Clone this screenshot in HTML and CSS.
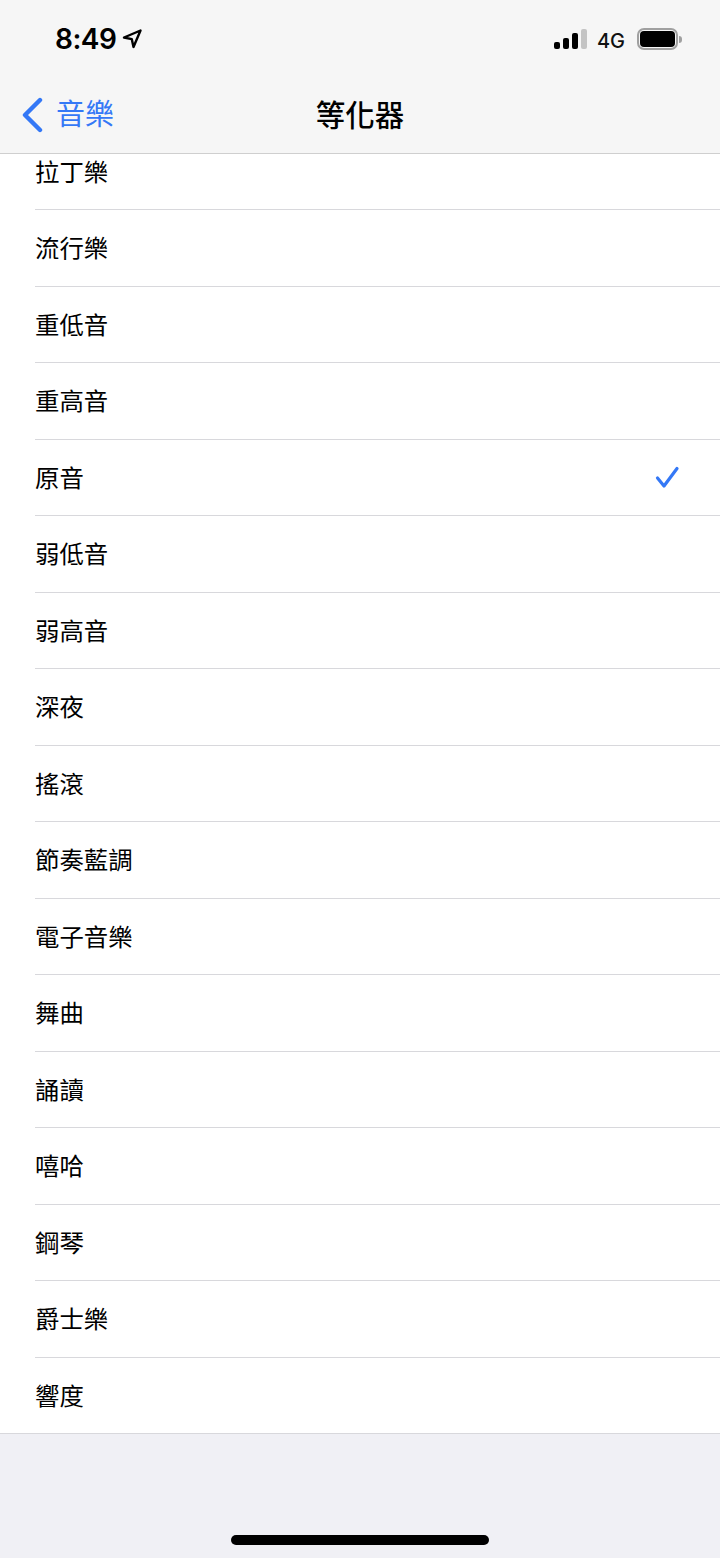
FILE: index.html
```html
<!DOCTYPE html>
<html lang="zh-Hant">
<head>
    <meta charset="UTF-8">
    <meta name="viewport" content="width=device-width, initial-scale=1.0">
    <title>等化器</title>
    <link rel="stylesheet" href="styles.css">
</head>
<body>

    <div class="top-bar">
        <div class="status-bar">
            <div class="status-left">
                <span class="time">8:49</span>
                <svg class="location" width="22" height="22" viewBox="0 0 22 22">
                    <path d="M3 9.5 L19.5 2.5 L12.5 19 L10.8 11.2 Z" fill="none" stroke="#000" stroke-width="2.4" stroke-linejoin="round"/>
                </svg>
            </div>
            <div class="status-right">
                <div class="signal">
                    <span class="signal-bar bar-1"></span>
                    <span class="signal-bar bar-2"></span>
                    <span class="signal-bar bar-3"></span>
                    <span class="signal-bar bar-4"></span>
                </div>
                <span class="network">4G</span>
                <div class="battery">
                    <div class="battery-body"><div class="battery-fill"></div></div>
                    <div class="battery-cap"></div>
                </div>
            </div>
        </div>

        <div class="nav-bar">
            <div class="back">
                <svg width="22" height="36" viewBox="0 0 22 36">
                    <path d="M19 3 L4 18 L19 33" fill="none" stroke="#3478f6" stroke-width="4.4" stroke-linecap="round" stroke-linejoin="round"/>
                </svg>
                <span class="back-label">音樂</span>
            </div>
            <div class="nav-title">等化器</div>
        </div>
    </div>

    <div class="list-wrap">
        <ul class="list">
            <li class="row">拉丁樂</li>
            <li class="row">流行樂</li>
            <li class="row">重低音</li>
            <li class="row">重高音</li>
            <li class="row">原音
                <svg class="check" width="26" height="26" viewBox="0 0 26 26">
                    <path d="M3.5 14 L10 22 L23 4.5" fill="none" stroke="#3478f6" stroke-width="3.2" stroke-linecap="round" stroke-linejoin="round"/>
                </svg>
            </li>
            <li class="row">弱低音</li>
            <li class="row">弱高音</li>
            <li class="row">深夜</li>
            <li class="row">搖滾</li>
            <li class="row">節奏藍調</li>
            <li class="row">電子音樂</li>
            <li class="row">舞曲</li>
            <li class="row">誦讀</li>
            <li class="row">嘻哈</li>
            <li class="row">鋼琴</li>
            <li class="row">爵士樂</li>
            <li class="row">響度</li>
        </ul>
    </div>

    <div class="home-area">
        <div class="home-indicator"></div>
    </div>

</body>
</html>
```

FILE: styles.css
```css
* {
    box-sizing: border-box;
}
body {
    margin: 0;
    height: 1558px;
    overflow: hidden;
    background-color: #f0f0f5;
    color: #000;
    font-family: "Inter", "Noto Sans CJK TC", sans-serif;
}
.top-bar {
    height: 154px;
    background-color: #f6f6f6;
    border-bottom: 1px solid #cfcfcf;
}
.status-bar {
    height: 77px;
    padding: 0 38px 0 55px;
    display: flex;
    justify-content: space-between;
    align-items: flex-start;
}
.status-left {
    display: flex;
    align-items: center;
    gap: 5px;
    padding-top: 21px;
}
.time {
    font-size: 28px;
    line-height: 36px;
    font-weight: 600;
    letter-spacing: -0.5px;
}
.status-right {
    display: flex;
    align-items: center;
    padding-top: 25.5px;
}
.signal {
    display: flex;
    align-items: flex-end;
    gap: 3px;
    height: 20px;
}
.signal-bar {
    width: 6px;
    border-radius: 2px;
    background-color: #000;
}
.bar-1 { height: 7px; }
.bar-2 { height: 11px; }
.bar-3 { height: 16px; }
.bar-4 { height: 20px; background-color: #c4c4c4; }
.network {
    margin-left: 10px;
    margin-top: 3px;
    font-size: 20px;
    line-height: 24px;
    font-weight: 500;
    color: #111;
}
.battery {
    margin-left: 12px;
    display: flex;
    align-items: center;
}
.battery-body {
    width: 41px;
    height: 22px;
    padding: 1px;
    border: 2px solid #a0a0a0;
    border-radius: 7px;
}
.battery-fill {
    height: 100%;
    background-color: #000;
    border-radius: 4px;
}
.battery-cap {
    width: 3px;
    height: 7px;
    margin-left: 1px;
    background-color: #a0a0a0;
    border-radius: 0 3px 3px 0;
}
.nav-bar {
    height: 76px;
    position: relative;
    display: flex;
    align-items: center;
    justify-content: center;
}
.back {
    position: absolute;
    left: 21px;
    top: 20px;
    display: flex;
    align-items: center;
    gap: 13px;
}
.back-label {
    font-size: 29px;
    line-height: 36px;
    color: #3478f6;
}
.nav-title {
    font-size: 29.5px;
    line-height: 36px;
    font-weight: 500;
}
.list-wrap {
    height: 1280px;
    overflow: hidden;
    background-color: #fff;
    border-bottom: 1px solid #d8d8dc;
}
.list {
    list-style: none;
    margin: -20.5px 0 0;
    padding: 0 0 0 35px;
}
.row {
    height: 76.5px;
    padding-right: 40px;
    padding-bottom: 2px;
    display: flex;
    align-items: center;
    justify-content: space-between;
    font-size: 24.4px;
    border-bottom: 1px solid #d8d8dc;
}
.row:last-child {
    border-bottom: none;
}
.check {
    margin-top: 2px;
}
.home-area {
    display: flex;
    justify-content: center;
    padding-top: 101px;
}
.home-indicator {
    width: 258px;
    height: 10px;
    border-radius: 5px;
    background-color: #000;
}
```
